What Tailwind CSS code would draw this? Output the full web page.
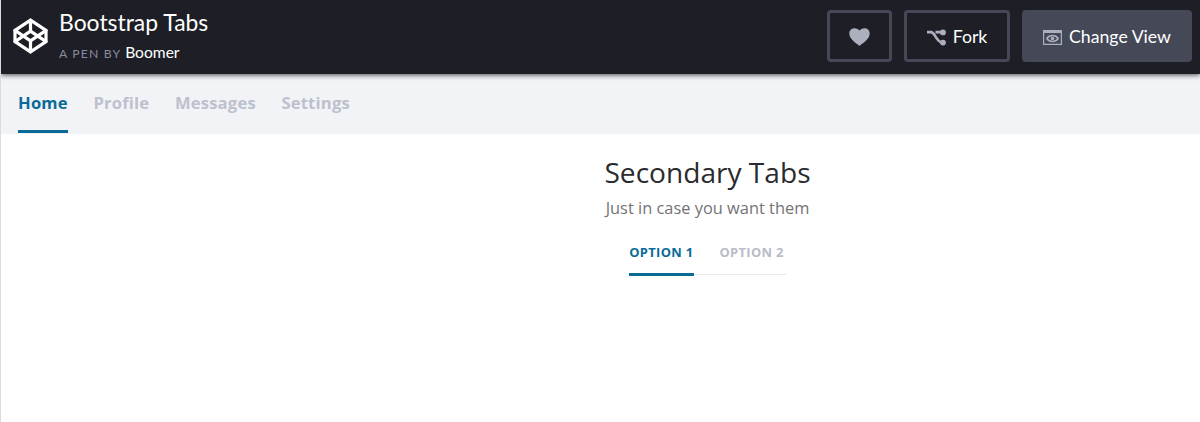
<!DOCTYPE html>
<html lang="en">
<head>
    <meta charset="UTF-8">
    <meta name="viewport" content="width=device-width, initial-scale=1.0">
    <script src="https://cdn.jsdelivr.net/npm/@tailwindcss/browser@4"></script>
    <title>Bootstrap Tabs</title>
</head>
<body class="bg-white h-[422px] overflow-hidden border-l border-[#dcdcde] font-['Open_Sans',sans-serif]">
    <header class="relative h-[74px] bg-[#1e1f26] pl-3 pr-2 flex items-start justify-between shadow-[0_1px_5px_rgba(0,0,0,0.7)] font-['Lato',sans-serif] text-white">
        <div class="flex">
            <svg class="mt-[18px] w-[35px] h-[36px]" viewBox="0 0 35 36" fill="none" stroke="#fff" stroke-width="3.2" stroke-linejoin="round" stroke-linecap="round">
                <path d="M17.5 2.2 L33 12.4 V23.6 L17.5 33.8 L2 23.6 V12.4 Z"/>
                <path d="M2 12.4 L17.5 22.8 L33 12.4 M2 23.6 L17.5 13.2 L33 23.6 M17.5 2.2 V13.2 M17.5 22.8 V33.8"/>
            </svg>
            <div class="ml-[11px] pt-[8px]">
                <h1 class="text-[22.9px] leading-[28px] whitespace-nowrap">Bootstrap Tabs</h1>
                <p class="mt-[5px] text-[15.6px] leading-[22px] whitespace-nowrap"><span class="text-[12.2px] tracking-[1.15px] text-[#868ca0]">A PEN BY</span> <a>Boomer</a></p>
            </div>
        </div>
        <div class="flex gap-3 pt-[10px] text-[17.7px]">
            <button class="w-[65px] h-[52px] rounded-[4px] border-3 border-[#444857] flex items-center justify-center">
                <svg class="mt-[2px] w-[21px] h-[18px]" viewBox="0 0 21 18" fill="#acafbe">
                    <path d="M10.5 18 C8.5 16 0.3 11.5 0.3 5.6 C0.3 2.4 2.6 0.3 5.4 0.3 C7.8 0.3 9.7 1.6 10.5 2.4 C11.3 1.6 13.2 0.3 15.6 0.3 C18.4 0.3 20.7 2.4 20.7 5.6 C20.7 11.5 12.5 16 10.5 18 Z"/>
                </svg>
            </button>
            <button class="w-[106px] h-[52px] rounded-[4px] border-3 border-[#444857] flex items-center justify-center gap-[6px]">
                <svg class="mt-[2px] w-[20px] h-[17px]" viewBox="0 0 20 17">
                    <path d="M0 3.2 H4 C8 3.2 9.5 13.6 15.5 13.6 M8.5 3.2 H15.5" fill="none" stroke="#acafbe" stroke-width="2.7"/>
                    <circle cx="16" cy="3.4" r="2.9" fill="#acafbe"/>
                    <circle cx="16" cy="13.6" r="2.9" fill="#acafbe"/>
                </svg>
                <span class="pt-[2px]">Fork</span>
            </button>
            <button class="w-[170px] h-[52px] rounded-[4px] bg-[#444857] flex items-center justify-center gap-[7px]">
                <svg class="mt-[3px] w-[19px] h-[15px]" viewBox="0 0 19 15" fill="none" stroke="#acafbe">
                    <path d="M0.6 0.6 H18.4 V14.4 H0.6 Z" stroke-width="1.2"/>
                    <path d="M0 1.5 H19" stroke-width="3"/>
                    <path d="M3.8 8.5 C6.5 4.6 12.5 4.6 15.2 8.5 C12.5 12.4 6.5 12.4 3.8 8.5 Z" stroke-width="1.5"/>
                    <circle cx="9.5" cy="8.5" r="1.8" fill="#acafbe" stroke="none"/>
                </svg>
                <span class="pt-[2px]">Change View</span>
            </button>
        </div>
    </header>

    <!-- Primary tabs -->
    <nav class="h-[60px] bg-[#f2f3f7] pl-[17px]">
        <ul class="flex gap-[25.5px] text-[16.6px] tracking-[0.2px] leading-[24px] font-bold text-[#bcc1cd] whitespace-nowrap">
            <li class="h-[59px] pt-[17px] border-b-3 border-[#0b6b97] text-[#0b6b97]">Home</li>
            <li class="pt-[17px]">Profile</li>
            <li class="pt-[17px]">Messages</li>
            <li class="pt-[17px]">Settings</li>
        </ul>
    </nav>

    <main class="pl-[214px] pt-[18px] flex flex-col items-center">
        <h2 class="text-[28.1px] leading-[40px] text-[#2b2b2e]">Secondary Tabs</h2>
        <p class="mt-[4px] text-[16.4px] leading-[24px] text-[#737376]">Just in case you want them</p>
        <!-- Secondary tabs -->
        <ul class="mt-[20px] flex gap-[26px] border-b border-[#e8e9ed] text-[13.4px] tracking-[0.35px] leading-[24px] font-semibold text-[#b8bcc6] whitespace-nowrap">
            <li class="h-[36px] -mb-[2px] border-b-3 border-[#0b6b97] text-[#0b6b97] font-bold text-[12.9px]">OPTION 1</li>
            <li class="pr-[2px] font-bold text-[12.9px]">OPTION 2</li>
        </ul>
    </main>
</body>
</html>
